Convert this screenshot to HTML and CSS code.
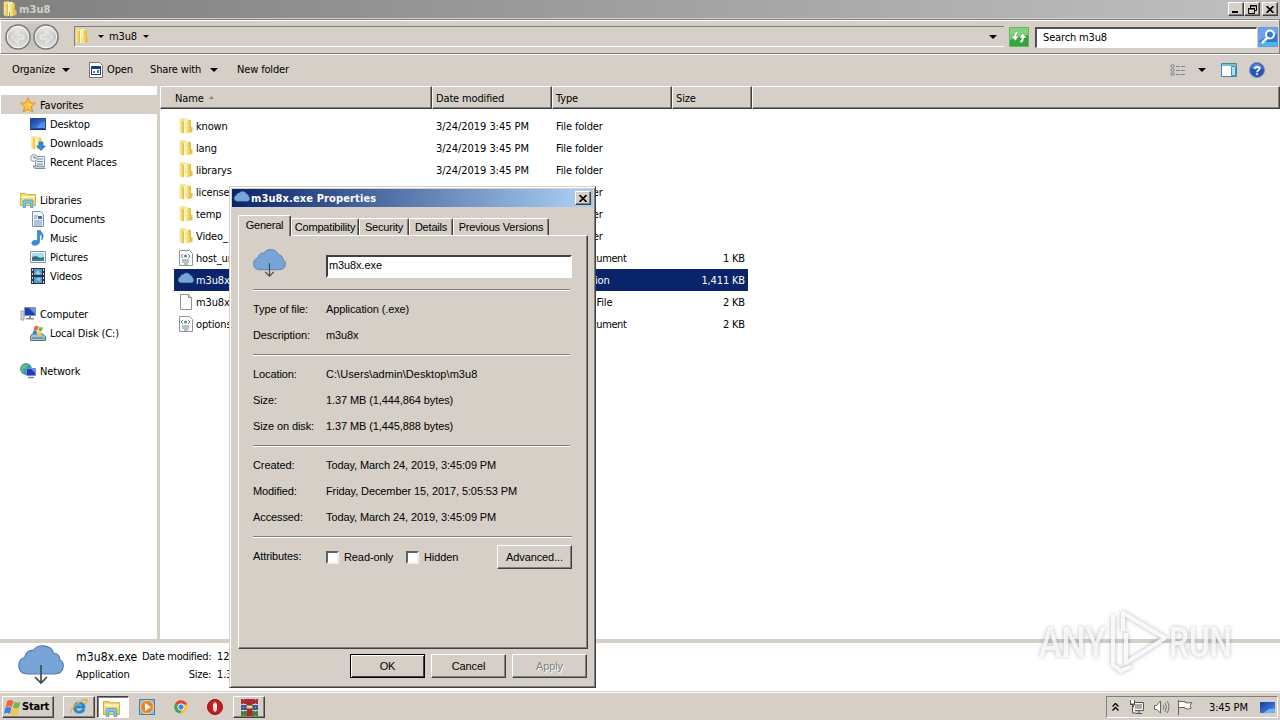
FILE: index.html
```html
<!DOCTYPE html>
<html lang="en">
<head>
    <meta charset="UTF-8">
    <meta name="viewport" content="width=device-width, initial-scale=1.0">
    <title>m3u8</title>
    <link rel="stylesheet" href="styles.css">
</head>
<body>
    <!-- Shared icons -->
    <svg class="sprite" width="0" height="0">
        <defs>
            <linearGradient id="gold"><stop offset="0" stop-color="#fff0a0"/><stop offset=".5" stop-color="#eed465"/><stop offset="1" stop-color="#dfb845"/></linearGradient>
            <linearGradient id="blue" x2="1" y2="1"><stop offset="0" stop-color="#123a9c"/><stop offset="1" stop-color="#4f94ea"/></linearGradient>
            <linearGradient id="silver" x2="0" y2="1"><stop offset="0" stop-color="#f1f1ef"/><stop offset=".5" stop-color="#c9c8c5"/><stop offset="1" stop-color="#e4e3e0"/></linearGradient>
        </defs>
        <symbol id="folder" viewBox="0 0 16 16">
            <path d="M2 1l5-.5v14L2 14z" fill="#f8e896" stroke="#e8d070" stroke-width=".6"/>
            <path d="M6 1h5v10H6z" fill="#f9eda8"/>
            <path d="M2 1.500l4 1.500v12.500L2 14z" fill="url(#gold)"/>
            <path d="M8 4l2-2h3v12.500L8 15.500z" fill="url(#gold)"/>
            <path d="M6.500 3v12" stroke="#fffbe0"/>
            <path d="M13 9h1.500v5H13z" fill="#e3c257"/>
        </symbol>
        <symbol id="cloud" viewBox="0 0 46 42">
            <path d="M10 29C3 29 .8 25 .8 20.500c0-4 2.200-7.500 6-8C8 7 11.500 5 15.500 5.500 18 1.500 21.500.5 25.500.800c5.500.5 9 3.500 9.800 7.200 4.500.2 6.700 3.500 6.500 7 2.700 1 3.700 3.500 3.400 6.500-.4 5-3.600 7.500-9.200 7.500z" fill="#78a4d8" stroke="#527cac" stroke-width="1.200"/>
        </symbol>
        <symbol id="cloud-down" viewBox="0 0 46 42">
            <use href="#cloud" width="46" height="42"/>
            <path d="M23 20v18M17 32l6 6 6-6" fill="none" stroke="#414955" stroke-width="1.700"/>
        </symbol>
        <symbol id="page" viewBox="0 0 16 16"><path d="M2.500.5h8l3 3v12h-11z" fill="#fdfdfd" stroke="#929292"/><path d="M10.500.5v3h3" fill="#ddd" stroke="#929292"/></symbol>
        <symbol id="xml" viewBox="0 0 16 16"><path d="M1.500.5h10l3 3v12h-13z" fill="#fbfdfd" stroke="#8c9696"/><path d="M5 4L3 6l2 2M10 4l2 2-2 2M4 10h7M4 12h7M6 14h4" fill="none" stroke="#71868c"/><circle cx="7.500" cy="6" r="1.500" fill="#438f90"/></symbol>
        <symbol id="star" viewBox="0 0 16 16"><path d="M8 .8l2.100 4.900 5.200.5-3.900 3.500 1.200 5.200L8 12.200l-4.600 2.700 1.200-5.200L.7 6.200l5.200-.5z" fill="#ffc53b" stroke="#e48a22"/><path d="M8 4l1 3 3 .5-3 1z" fill="#ffec89"/></symbol>
        <symbol id="desktop" viewBox="0 0 16 16"><path d="M.5 2.500h15v10H.5z" fill="url(#blue)" stroke="#234b91"/><path d="M7 12c2-5 5-6 8-6v6z" fill="#65a2ed" opacity=".6"/><path d="M0 13h16v1H0z" fill="#123978"/></symbol>
        <symbol id="downloads" viewBox="0 0 16 16"><use href="#folder" width="14" height="16"/><path d="M9 7h4v4h2.500L11 15.500 6.500 11H9z" fill="#2c8ad8" stroke="#1767b0" stroke-width=".6"/></symbol>
        <symbol id="recent" viewBox="0 0 16 16"><path d="M5.500 2.500h9v10h-9z" fill="#eef4f8" stroke="#8295a4"/><path d="M3 12h10l2 2.500H5z" fill="#c4d0d9" stroke="#7d8e9b"/><path d="M8 5h5M7 7.500h6M7 10h6" stroke="#6688a0"/><circle cx="4" cy="4" r="3.400" fill="#eef3f6" stroke="#8c9aa5"/><path d="M4 2v2h2" fill="none" stroke="#577"/></symbol>
        <symbol id="libraries" viewBox="0 0 16 16"><path d="M.5 3.500v-2h5l1 1h9v11H.5z" fill="#f4da72" stroke="#d3b043"/><path d="M1 5h14" stroke="#fff5b9" stroke-width="2"/><path d="M3 15.500V9.500q0-1.500 1.500-1.500h7q1.500 0 1.500 1.500v6h-2.500V11h-5v4.500z" fill="#82c6ec" stroke="#4a9ac9" stroke-width=".8"/></symbol>
        <symbol id="documents" viewBox="0 0 16 16"><path d="M2.500.5h8l3 3v12h-11z" fill="#f5faff" stroke="#7991ac"/><path d="M4 5h4M4 7h3M4 10h8M4 12h8M4 14h8" stroke="#6b8db4"/><path d="M8 5h4v3H8z" fill="#42729f"/></symbol>
        <symbol id="music" viewBox="0 0 16 16"><path d="M7.500.5v10.200C4.500 9.500 1.500 11.200 1.800 13.600c.5 2.700 7.800 2 7.800-2.200V4.300c2.500 1 3 2.700 2 5.700 3.400-4.500.4-6.500-1.200-9.500z" fill="#3293d8" stroke="#1b6cb3" stroke-width=".6"/></symbol>
        <symbol id="pictures" viewBox="0 0 16 16"><path d="M.5 2.500h15v11H.5z" fill="#fff" stroke="#8493a1"/><path d="M2 4h12v8H2z" fill="#a8dcf3"/><path d="M2 8l4-1 4 2 4-1v4H2z" fill="#35705d"/><path d="M2 10h12v2H2z" fill="#337eb5"/></symbol>
        <symbol id="videos" viewBox="0 0 16 16"><path d="M1 0h14v16H1z" fill="#28343f"/><path d="M4 1h8v6H4zM4 9h8v6H4z" fill="#509ad0"/><path d="M5 5l3-3 3 4-3 1zM6 12l3-3 2 4z" fill="#91ced8"/><path d="M2.500 1v14M13.500 1v14" stroke="#ddd" stroke-dasharray="2 2"/></symbol>
        <symbol id="computer" viewBox="0 0 16 16"><path d="M1 5h3v9H1z" fill="#d5d8db" stroke="#858c93" stroke-width=".7"/><path d="M4.500 1.500h11v8h-11z" fill="#193fb3" stroke="#8b96ac"/><path d="M9 2h6v6z" fill="#6d91e5"/><path d="M9 10h2v2h3v1.500H6V12h3z" fill="#818c99"/></symbol>
        <symbol id="disk" viewBox="0 0 16 16"><path d="M2 9h11l2.500 3v3.500H.5V12z" fill="#a5c3cc" stroke="#507986"/><path d="M2 13h11" stroke="#416b80"/><path d="M13 13h2" stroke="#5bd653"/><use href="#winflag" x="2" y="0" width="12" height="11"/></symbol>
        <symbol id="network" viewBox="0 0 16 16"><circle cx="6" cy="6" r="5.500" fill="#329ac5" stroke="#267290" stroke-width=".6"/><path d="M2 3q4-3 6-1L6 5 3 6l1 4Q0 8 2 3z" fill="#61c773"/><path d="M6.500 5.500h9v7h-9z" fill="#183ebf" stroke="#8190bb"/><path d="M11 6h4v4z" fill="#658bec"/><path d="M8 14.500h6" stroke="#77879a" stroke-width="1.500"/></symbol>
        <symbol id="winflag" viewBox="0 0 16 16"><path d="M3 2q3-2 6 0L7.500 7.500Q5 6 1.500 7.500z" fill="#ed6638"/><path d="M10 2.500q3 2 5.500 0L14 8q-3 2-5.500 0z" fill="#71b845"/><path d="M1 8.500q3-2 6 0L5.500 14q-3-2-5.500 0z" fill="#3e82d8"/><path d="M8 9q3 2 6 0l-1.500 5.500q-3 2-6 0z" fill="#f9c63c"/></symbol>
        <symbol id="arrow" viewBox="0 0 8 4"><path d="M0 0h8L4 4z" fill="#000"/></symbol>
        <symbol id="cross" viewBox="0 0 8 7"><path d="M.5 0l7 7M7.500 0l-7 7" stroke="#000" stroke-width="1.600"/></symbol>
        <symbol id="nav" viewBox="0 0 26 26"><circle cx="13" cy="13" r="12" fill="url(#silver)" stroke="#777" stroke-width="1.500"/><circle cx="13" cy="13" r="10.700" fill="none" stroke="#f5f5f3"/><path d="M19 11h-6V7l-7 6 7 6v-4h6z" fill="#d9d8d6" stroke="#efefed"/></symbol>
    </svg>

    <div class="desktop">
        <div class="titlebar">
            <svg class="icon"><use href="#folder"/></svg>
            <span class="title">m3u8</span>
            <div class="win-btn"><svg width="8" height="7"><path d="M0 5h6v2H0z"/></svg></div>
            <div class="win-btn"><svg width="9" height="9" fill="none" stroke="#000"><path d="M2.500 3V.5h6v5H6M2 1h7M.5 3.500h6v5h-6zM0 4h7"/></svg></div>
            <div class="win-btn last"><svg width="8" height="7"><use href="#cross"/></svg></div>
        </div>

        <div class="addressbar">
            <div class="nav-buttons">
                <svg width="26" height="26"><use href="#nav"/></svg>
                <svg class="flip" width="26" height="26"><use href="#nav"/></svg>
            </div>
            <div class="address">
                <svg class="icon"><use href="#folder"/></svg>
                <svg class="small-arrow"><use href="#arrow"/></svg>
                <span>m3u8</span>
                <svg class="small-arrow"><use href="#arrow"/></svg>
                <svg class="arrow end"><use href="#arrow"/></svg>
            </div>
            <svg class="refresh" width="20" height="20" viewBox="0 0 20 20"><path d="M.5.5h19v19H.5z" fill="#31a735" stroke="#6eae6c"/><path d="M1 1h18v7q-9 1-18 5z" fill="#80d47c"/><path d="M9 4Q5 4 5 9H2l4.500 5L10 9H7.500q0-2 1.500-2.500zM11 16q4 0 4-5h3l-4.500-5L10 11h2.500q0 2-1.500 2.500z" fill="#fff" stroke="#2b8a2d" stroke-width=".5"/></svg>
            <div class="search">Search m3u8</div>
            <svg class="go" width="20" height="20" viewBox="0 0 20 20"><path d="M.5.5h19v19H.5z" fill="#2f73d3" stroke="#6c9bd5"/><path d="M1 1h18v6Q9 8 1 14z" fill="#6ba4ea"/><path d="M1 15h18v4H1z" fill="#4cb3ef"/><path d="M9.500 10.500L4 16" stroke="#fff" stroke-width="2.500"/><circle cx="12" cy="7.500" r="4" fill="#3a78d8" stroke="#fff" stroke-width="2"/></svg>
        </div>

        <div class="toolbar">
            <span class="tool organize">Organize <svg class="arrow"><use href="#arrow"/></svg></span>
            <span class="tool open"><svg width="14" height="16"><path d="M.5.5h10l3 3v12H.5z" fill="#fff" stroke="#777"/><path d="M2.500 4.500h9v8h-9z" fill="#fff" stroke="#183c8c"/><path d="M2 4h10v3H2z" fill="#183c8c"/><path d="M4 9h2v2H4zM8 8h2v3H8z" fill="#526fa8"/></svg>Open</span>
            <span class="tool share">Share with <svg class="arrow"><use href="#arrow"/></svg></span>
            <span class="tool">New folder</span>
            <div class="views">
                <svg width="16" height="13"><path d="M1 1h3v2H1zM1 5h3v2H1zM1 9h3v2H1z" fill="#fff" stroke="#718391"/><path d="M6 2.500h4M11 2.500h4M6 6.500h4M11 6.500h4M6 10.500h4M11 10.500h4" stroke="#778b9b"/></svg>
                <svg class="arrow"><use href="#arrow"/></svg>
                <svg class="preview" width="16" height="14"><path d="M.5.5h15v13H.5z" fill="#fff" stroke="#3b88a9"/><path d="M1 1h14v2H1z" fill="#80bad0"/><path d="M10.500 3.500h4v9h-4z" fill="#b1dfef" stroke="#4198b9"/></svg>
                <svg class="help" width="16" height="16"><circle cx="8" cy="8" r="7.500" fill="#2855bd" stroke="#7893bc"/><path d="M2 6q6-9 12 0-6 3-12 0z" fill="#6286d0"/><text x="8" y="12.500" text-anchor="middle">?</text></svg>
            </div>
        </div>

        <div class="main">
            <div class="sidebar">
                <div class="nav-item root active"><svg class="icon"><use href="#star"/></svg><span>Favorites</span></div>
                <div class="nav-item"><svg class="icon"><use href="#desktop"/></svg><span>Desktop</span></div>
                <div class="nav-item"><svg class="icon"><use href="#downloads"/></svg><span>Downloads</span></div>
                <div class="nav-item"><svg class="icon"><use href="#recent"/></svg><span>Recent Places</span></div>
                <div class="nav-item root group"><svg class="icon"><use href="#libraries"/></svg><span>Libraries</span></div>
                <div class="nav-item"><svg class="icon"><use href="#documents"/></svg><span>Documents</span></div>
                <div class="nav-item"><svg class="icon"><use href="#music"/></svg><span>Music</span></div>
                <div class="nav-item"><svg class="icon"><use href="#pictures"/></svg><span>Pictures</span></div>
                <div class="nav-item"><svg class="icon"><use href="#videos"/></svg><span>Videos</span></div>
                <div class="nav-item root group"><svg class="icon"><use href="#computer"/></svg><span>Computer</span></div>
                <div class="nav-item"><svg class="icon"><use href="#disk"/></svg><span>Local Disk (C:)</span></div>
                <div class="nav-item root group"><svg class="icon"><use href="#network"/></svg><span>Network</span></div>
            </div>

            <div class="files">
                <div class="file-header">
                    <div class="name-head">Name <svg width="5" height="3"><path d="M0 3h5L2.500 0z" fill="#888"/></svg></div>
                    <div>Date modified</div>
                    <div>Type</div>
                    <div>Size</div>
                    <div></div>
                </div>
                <div class="file-list">
                    <div class="file"><svg class="icon"><use href="#folder"/></svg><span>known</span><span class="date">3/24/2019 3:45 PM</span><span>File folder</span><span></span></div>
                    <div class="file"><svg class="icon"><use href="#folder"/></svg><span>lang</span><span class="date">3/24/2019 3:45 PM</span><span>File folder</span><span></span></div>
                    <div class="file"><svg class="icon"><use href="#folder"/></svg><span>librarys</span><span class="date">3/24/2019 3:45 PM</span><span>File folder</span><span></span></div>
                    <div class="file"><svg class="icon"><use href="#folder"/></svg><span>license</span><span></span><span>File folder</span><span></span></div>
                    <div class="file"><svg class="icon"><use href="#folder"/></svg><span>temp</span><span></span><span>File folder</span><span></span></div>
                    <div class="file"><svg class="icon"><use href="#folder"/></svg><span>Video_</span><span></span><span>File folder</span><span></span></div>
                    <div class="file"><svg class="icon"><use href="#xml"/></svg><span>host_url</span><span></span><span class="type">XML Document</span><span>1 KB</span></div>
                    <div class="file selected"><svg class="icon"><use href="#cloud"/></svg><span>m3u8x.exe</span><span></span><span>Application</span><span>1,411 KB</span></div>
                    <div class="file"><svg class="icon"><use href="#page"/></svg><span>m3u8x.exe</span><span></span><span>CONFIG File</span><span>2 KB</span></div>
                    <div class="file"><svg class="icon"><use href="#xml"/></svg><span>options</span><span></span><span class="type">XML Document</span><span>2 KB</span></div>
                </div>
            </div>
        </div>

        <div class="details">
            <svg width="46" height="42"><use href="#cloud-down"/></svg>
            <div class="details-grid">
                <span class="file-name">m3u8x.exe</span><span class="label">Date modified:</span><span>12/15/2017</span>
                <span>Application</span><span class="label">Size:</span><span>1.37 MB</span>
            </div>
        </div>

        <div class="taskbar">
            <div class="start"><svg width="17" height="17"><use href="#winflag"/></svg>Start</div>
            <div class="task raised"><svg width="18" height="18" viewBox="0 0 18 18"><path d="M14 11q-2 4-6 3-4-1-3-6 1-3 5-3 4 1 4 4H6" fill="none" stroke="#2389d4" stroke-width="2.800"/><path d="M1 15Q0 11 8 5q8-5 9-3 0 2-2 4" fill="none" stroke="#e4b535" stroke-width="1.500"/></svg></div>
            <div class="task pressed"><svg width="17" height="17"><use href="#libraries"/></svg></div>
            <div class="task player"><svg width="16" height="16"><path d="M.5.5h15v15H.5z" fill="#87bce2" stroke="#3f83b3"/><circle cx="8" cy="8" r="6.500" fill="#ed811c" stroke="#fbd4a0"/><path d="M6 4l6 4-6 4z" fill="#fff"/></svg></div>
            <div class="task"><svg width="14" height="14" viewBox="0 0 14 14"><circle cx="7" cy="7" r="6.500" fill="#f6c42d"/><path d="M7 7L1.200 3.500A6.800 6.800 0 0 1 13.200 4.500H7z" fill="#dd4a38"/><path d="M1.200 3.500A6.700 6.700 0 0 0 6 13.600L9 8z" fill="#43a350"/><circle cx="7" cy="7" r="3.200" fill="#4586e5" stroke="#fff"/></svg></div>
            <div class="task"><svg width="16" height="16"><circle cx="8" cy="8" r="7.500" fill="#c7191f" stroke="#8f171a"/><ellipse cx="8" cy="8" rx="1.500" ry="4.500" fill="#e8ddd5" stroke="#fff"/></svg></div>
            <div class="task raised rar"><svg width="17" height="17"><path d="M0 0h17v5H0z" fill="#a72f3d"/><path d="M0 6h17v5H0z" fill="#3b57a2"/><path d="M0 12h17v5H0z" fill="#3f843d"/><path d="M6 0h5v17H6z" fill="#b5242d"/><path d="M5 6h7v4H5z" fill="#ddd2b5" stroke="#584934"/><path d="M2.500 0v17M14.500 0v17" stroke="#d7a55f" stroke-dasharray="1 3"/></svg></div>
            <div class="tray">
                <svg width="7" height="8"><path d="M.5 3.500l3-3 3 3M.5 7.500l3-3 3 3" fill="none" stroke="#000" stroke-width="1.300"/></svg>
                <svg class="net" width="16" height="15"><path d="M4.500 2.500h10v8h-10z" fill="#fff" stroke="#555"/><path d="M6 4h7v5H6z" fill="#aaa"/><path d="M7 13.500h6M10 11v2" stroke="#555"/><path d="M1.500 0v4h4V0M1 4.500h5M3.500 5v8H7" fill="#fff" stroke="#555"/></svg>
                <svg class="volume" width="17" height="15"><path d="M1.500 5.500h2L7.500 1v12l-4-3.500h-2z" fill="#fff" stroke="#666"/><path d="M10 5q2 2 0 5M12 3q3 4 0 9M14 1q4 6 0 12" fill="none" stroke="#777"/></svg>
                <svg class="flag" width="17" height="15"><path d="M1.500 0v15M2 1.500h6v1q3 1 7 0-3 3-1 6-4 1-6 0v-1H2" fill="#fff" stroke="#666"/></svg>
                <span class="clock">3:45 PM</span>
                <svg width="15" height="13"><path d="M0 1h15v11H0z" fill="url(#blue)"/><path d="M4 12q4-5 11-4v4z" fill="#76aff2"/></svg>
            </div>
        </div>

        <!-- Properties window -->
        <div class="dialog">
            <div class="dialog-title">
                <svg width="16" height="15"><use href="#cloud"/></svg>
                <span>m3u8x.exe Properties</span>
                <div class="win-btn"><svg width="8" height="7"><use href="#cross"/></svg></div>
            </div>
            <div class="tabs">
                <div class="tab current">General</div>
                <div class="tab compat">Compatibility</div>
                <div class="tab security">Security</div>
                <div class="tab detail">Details</div>
                <div class="tab versions">Previous Versions</div>
            </div>
            <div class="tab-panel">
                <div class="name-row">
                    <svg width="33" height="30"><use href="#cloud-down"/></svg>
                    <div class="name-input">m3u8x.exe</div>
                </div>
                <div class="section">
                    <div class="row"><span>Type of file:</span><span>Application (.exe)</span></div>
                    <div class="row"><span>Description:</span><span>m3u8x</span></div>
                </div>
                <div class="section">
                    <div class="row path"><span>Location:</span><span>C:\Users\admin\Desktop\m3u8</span></div>
                    <div class="row"><span>Size:</span><span>1.37 MB (1,444,864 bytes)</span></div>
                    <div class="row"><span>Size on disk:</span><span>1.37 MB (1,445,888 bytes)</span></div>
                </div>
                <div class="section">
                    <div class="row"><span>Created:</span><span>Today, March 24, 2019, 3:45:09 PM</span></div>
                    <div class="row"><span>Modified:</span><span>Friday, December 15, 2017, 5:05:53 PM</span></div>
                    <div class="row"><span>Accessed:</span><span>Today, March 24, 2019, 3:45:09 PM</span></div>
                </div>
                <div class="section attributes">
                    <span class="attr-label">Attributes:</span>
                    <span class="check"><i></i>Read-only</span>
                    <span class="check"><i></i>Hidden</span>
                    <div class="btn">Advanced...</div>
                </div>
            </div>
            <div class="dialog-buttons">
                <div class="btn default">OK</div>
                <div class="btn">Cancel</div>
                <div class="btn disabled">Apply</div>
            </div>
        </div>

        <svg class="watermark" width="210" height="80" viewBox="0 0 210 80">
            <text x="5" y="53" textLength="67" lengthAdjust="spacingAndGlyphs">ANY</text>
            <path d="M89 27V9L131 34 92 59V29M79 11v50l8 6 10-5"/>
            <text x="135" y="53" textLength="63" lengthAdjust="spacingAndGlyphs">RUN</text>
        </svg>
    </div>
</body>
</html>
```
FILE: styles.css
```css
:root {
    --face: #d5cfc7;
    --shadow: #808080;
    --dark: #404040;
    --navy: #0a246a;
}

* {
    box-sizing: border-box;
}

body {
    margin: 0;
    font-family: 'DejaVu Sans Condensed', 'DejaVu Sans', sans-serif;
    font-size: 11px;
    line-height: 14px;
    letter-spacing: -0.15px;
    color: #000;
    overflow: hidden;
}

svg {
    display: block;
    flex: none;
}

.sprite {
    position: absolute;
}

.desktop {
    position: relative;
    width: 1280px;
    height: 720px;
    display: flex;
    flex-direction: column;
    background: var(--face);
    white-space: nowrap;
}

.icon {
    width: 16px;
    height: 16px;
}

.arrow {
    width: 8px;
    height: 4px;
}

.small-arrow {
    width: 6px;
    height: 3px;
}

/* Explorer title bar */
.titlebar {
    height: 18px;
    display: flex;
    align-items: center;
    padding: 0 2px;
    background: linear-gradient(90deg, #808080, #c0c0c0);
}

.title {
    flex: 1;
    margin-left: 1px;
    padding-top: 1px;
    color: #d4d0c8;
    font-weight: bold;
    letter-spacing: 0.1px;
}

.win-btn {
    width: 16px;
    height: 14px;
    display: flex;
    align-items: center;
    justify-content: center;
    background: var(--face);
    border: 1px solid;
    border-color: #fff var(--dark) var(--dark) #fff;
    box-shadow: inset -1px -1px var(--shadow);
}

.win-btn.last {
    margin-left: 2px;
}

/* Address bar */
.addressbar {
    height: 35px;
    margin-top: 1px;
    display: flex;
    align-items: center;
    padding: 0 1px 0 4px;
    border: 1px solid var(--shadow);
    border-left-color: #fff;
    box-shadow: inset 0 1px #fff, 0 1px #fff;
}

.nav-buttons {
    display: flex;
    gap: 2px;
    width: 54px;
    background: #c6c4c0;
    border-radius: 13px;
}

.flip {
    transform: scaleX(-1);
}

.address {
    width: 930px;
    height: 21px;
    margin-left: 15px;
    display: flex;
    align-items: center;
    border: 1px solid var(--shadow);
    border-right: 0;
    border-bottom-color: #fff;
}

.address .icon {
    margin: -2px 8px 0 -1px;
}

.address span {
    margin: 0 6px 0 5px;
}

.address .end {
    margin-left: auto;
    margin-right: 7px;
}

.refresh {
    margin-left: 5px;
}

.search {
    width: 222px;
    height: 21px;
    margin: 1px 0 0 6px;
    padding: 2px 6px;
    background: #fff;
    border: 1px solid var(--shadow);
    border-width: 2px 1px 1px 2px;
    border-color: #505050 #fff #fff #505050;
}

.go {
    margin-left: 1px;
}

/* Toolbar */
.toolbar {
    height: 32px;
    display: flex;
    align-items: center;
    padding: 0 15px 0 12px;
}

.tool {
    display: flex;
    align-items: center;
}

.organize {
    width: 77px;
    gap: 7px;
}

.open {
    width: 61px;
    gap: 4px;
}

.share {
    width: 87px;
    gap: 9px;
}

.views {
    display: flex;
    align-items: center;
    margin-left: auto;
}

.views .arrow {
    margin-left: 12px;
}

.preview {
    margin-left: 15px;
}

.help {
    margin-left: 12px;
}

.help text {
    font: bold 12px 'Liberation Sans', sans-serif;
    fill: #fff;
}

/* Folder tree and file list */
.main {
    height: 553px;
    display: flex;
    background: #fff;
}

.sidebar {
    width: 160px;
    padding-top: 9px;
    border-right: 3px solid var(--face);
}

.nav-item {
    height: 19px;
    display: flex;
    align-items: center;
    gap: 4px;
    padding-left: 30px;
}

.nav-item span {
    padding-top: 2px;
}

.nav-item.root {
    padding-left: 20px;
}

.nav-item.group {
    margin-top: 19px;
}

.nav-item.active {
    margin-left: 1px;
    padding-left: 19px;
    background: var(--face);
}

.files {
    flex: 1;
}

.file-header {
    display: grid;
    grid-template-columns: 272px 120px 120px 80px 1fr;
    height: 23px;
}

.file-header div {
    padding: 5px 3px 0;
    background: var(--face);
    border: 1px solid;
    border-color: #fff var(--dark) var(--dark) #fff;
    box-shadow: inset -1px -1px var(--shadow);
}

.file-header .name-head {
    display: flex;
    gap: 5px;
    padding-left: 14px;
}

.name-head svg {
    margin-top: 4px;
}

.file-list {
    padding: 6px 0 0 14px;
}

.file {
    display: grid;
    grid-template-columns: 18px 240px 120px 119px 70px;
    width: 574px;
    height: 22px;
    align-items: center;
    padding-left: 4px;
}

.file span {
    padding-top: 2px;
}

.file span:last-child {
    text-align: right;
}

.file .date {
    letter-spacing: -0.05px;
}

.file .type {
    letter-spacing: -0.4px;
}

.file.selected {
    color: #fff;
    background: var(--navy);
}

.file.selected .icon {
    margin-top: -1px;
}

/* Details pane */
.details {
    height: 52px;
    display: flex;
    padding: 6px 0 0 18px;
    background: #fff;
    border-top: 4px solid var(--face);
}

.details svg {
    margin-top: -4px;
}

.details-grid {
    display: grid;
    grid-template-columns: 66px 69px 100px;
    grid-template-rows: 18px 18px;
    margin-left: 12px;
    padding-top: 1px;
}

.details-grid .file-name {
    font-size: 12px;
    letter-spacing: 0.15px;
}

.details-grid .label {
    text-align: right;
    letter-spacing: -0.3px;
}

.details-grid .label + span {
    padding-left: 6px;
}

/* Taskbar */
.taskbar {
    flex: 1;
    display: flex;
    align-items: flex-start;
    margin-top: 1px;
    padding: 3px 2px 0;
    border-top: 1px solid #fff;
}

.start {
    width: 52px;
    height: 22px;
    display: flex;
    align-items: center;
    gap: 1px;
    padding-left: 1px;
    font-weight: bold;
    letter-spacing: -0.2px;
    border: 1px solid;
    border-color: #fff var(--dark) var(--dark) #fff;
    box-shadow: inset -1px -1px var(--shadow);
    margin-right: 9px;
}

.task {
    width: 32px;
    height: 22px;
    margin-right: 2px;
    display: flex;
    align-items: center;
    justify-content: center;
}

.raised {
    border: 1px solid;
    border-color: #fff var(--dark) var(--dark) #fff;
    box-shadow: inset -1px -1px var(--shadow);
}

.pressed {
    background: #fff;
    border: 1px solid;
    border-color: var(--dark) #fff #fff var(--dark);
    box-shadow: inset 1px 1px var(--shadow);
    padding: 2px 4px 0 0;
}

.tray {
    width: 172px;
    height: 22px;
    margin-left: auto;
    display: flex;
    align-items: center;
    padding-left: 5px;
    border: 1px solid;
    border-color: var(--shadow) #fff #fff var(--shadow);
}

.net {
    margin-left: 10px;
}

.volume {
    margin-left: 8px;
}

.flag {
    margin-left: 7px;
}

.clock {
    width: 51px;
    margin-left: 15px;
    padding-top: 1px;
}

/* Properties dialog */
.dialog {
    position: absolute;
    left: 229px;
    top: 186px;
    width: 367px;
    height: 502px;
    padding: 2px;
    background: var(--face);
    border: 1px solid;
    border-color: var(--face) var(--dark) var(--dark) var(--face);
    box-shadow: inset 1px 1px #fff, inset -1px -1px var(--shadow);
    font-family: 'Liberation Sans', Arial, sans-serif;
    letter-spacing: -0.1px;
}

.dialog-title {
    height: 18px;
    display: flex;
    align-items: center;
    padding: 0 2px;
    background: linear-gradient(90deg, #0a246a, #a6caf0 95%);
    color: #fff;
    font: bold 11px 'DejaVu Sans Condensed', sans-serif;
    letter-spacing: 0.12px;
}

.dialog-title span {
    flex: 1;
    margin-left: 1px;
}

.tabs {
    display: flex;
    align-items: flex-end;
    height: 28px;
    padding-left: 6px;
}

.tab {
    height: 17px;
    padding-top: 1px;
    text-align: center;
    letter-spacing: -0.2px;
    border: 1px solid #fff;
    border-bottom: 0;
    border-right-color: var(--dark);
    border-radius: 2px 2px 0 0;
    box-shadow: inset -1px 0 var(--shadow);
}

.tab.current {
    position: relative;
    z-index: 1;
    width: 53px;
    height: 21px;
    margin-bottom: -1px;
    padding-top: 2px;
    background: var(--face);
}

.compat {
    width: 68px;
}

.security {
    width: 50px;
}

.detail {
    width: 44px;
}

.versions {
    width: 96px;
}

.tab-panel {
    height: 414px;
    margin: 0 5px 0 6px;
    padding: 13px 14px 0;
    border: 1px solid;
    border-color: #fff var(--dark) var(--dark) #fff;
    box-shadow: inset -1px -1px var(--shadow);
}

.name-row {
    display: flex;
    height: 40px;
}

.name-input {
    width: 246px;
    height: 23px;
    margin: 6px 0 0 40px;
    padding: 1px;
    background: #fff;
    border: 2px solid;
    border-color: var(--dark) #fff #fff var(--dark);
}

.section {
    width: 317px;
    padding: 6px 0;
    border-top: 1px solid var(--shadow);
    box-shadow: inset 0 1px #fff;
}

.row {
    display: flex;
    height: 26px;
    align-items: center;
}

.row span:first-child {
    width: 73px;
}

.row.path span:last-child {
    letter-spacing: 0.06px;
}

.attributes {
    display: flex;
    width: 319px;
    padding-top: 8px;
}

.attr-label {
    width: 73px;
    padding-top: 4px;
}

.check {
    display: flex;
    height: 24px;
    align-items: center;
    width: 80px;
    gap: 5px;
}

.check i {
    width: 13px;
    height: 13px;
    background: #fff;
    border: 2px solid;
    border-color: #606060 #eee #eee #606060;
}

.btn {
    width: 75px;
    height: 24px;
    display: flex;
    align-items: center;
    justify-content: center;
    padding-bottom: 1px;
    border: 1px solid;
    border-color: #fff var(--dark) var(--dark) #fff;
    box-shadow: inset -1px -1px var(--shadow);
}

.attributes .btn {
    margin-left: auto;
    padding-bottom: 0;
}

.btn.default {
    border-color: #000;
    box-shadow: inset 1px 1px #fff, inset -1px -1px var(--dark);
}

.btn.disabled {
    color: var(--shadow);
    text-shadow: 1px 1px #fff;
}

.dialog-buttons {
    display: flex;
    justify-content: flex-end;
    gap: 6px;
    padding: 5px 6px 0 0;
}

/* Logo over the lower right corner */
.watermark {
    position: absolute;
    left: 1034px;
    top: 604px;
    filter: drop-shadow(0 0 2px rgba(0, 0, 0, 0.35));
}

.watermark text {
    font: 500 43px 'Roboto', sans-serif;
    letter-spacing: 0;
    fill: #fff;
    fill-opacity: 0.8;
}

.watermark path {
    fill: none;
    stroke: #fff;
    stroke-opacity: 0.85;
    stroke-width: 4;
    stroke-linejoin: round;
}
```
